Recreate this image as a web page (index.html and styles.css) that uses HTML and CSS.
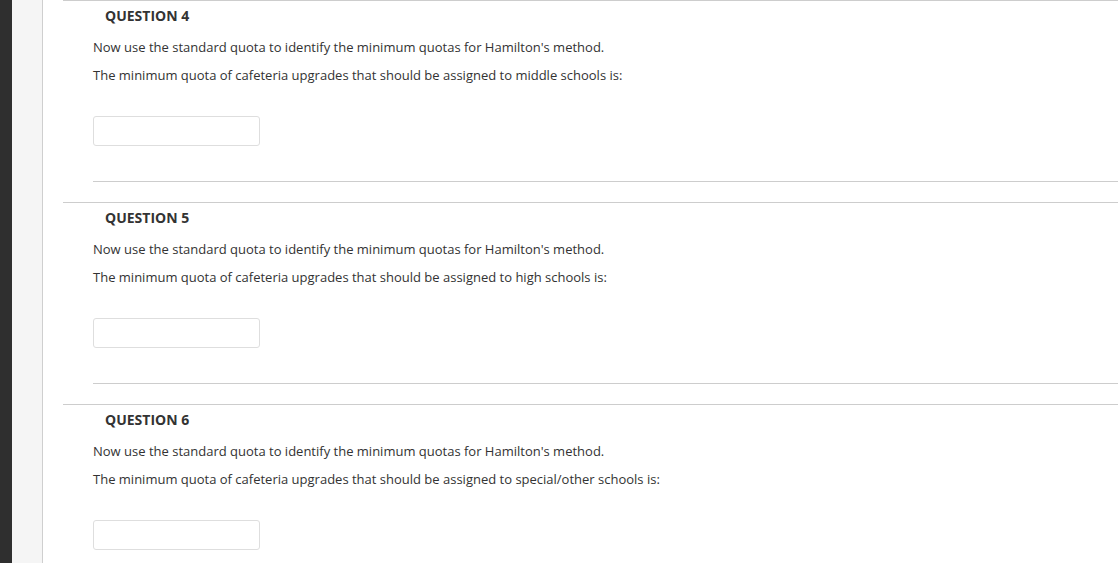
FILE: index.html
```html
<!DOCTYPE html>
<html>
<head>
<meta charset="utf-8">
<link rel="stylesheet" href="styles.css">
</head>
<body>
<div class="page">
  <div class="rail"></div>
  <div class="side"></div>
  <main class="main">
    <section class="question">
      <h3 class="q-title">QUESTION 4</h3>
      <div class="q-body">
        <p class="q-text">Now use the standard quota to identify the minimum quotas for Hamilton's method.</p>
        <p class="q-text">The minimum quota of cafeteria upgrades that should be assigned to middle schools is:</p>
        <input class="q-input" type="text">
        <hr class="q-divider">
      </div>
    </section>
    <section class="question">
      <h3 class="q-title">QUESTION 5</h3>
      <div class="q-body">
        <p class="q-text">Now use the standard quota to identify the minimum quotas for Hamilton's method.</p>
        <p class="q-text">The minimum quota of cafeteria upgrades that should be assigned to high schools is:</p>
        <input class="q-input" type="text">
        <hr class="q-divider">
      </div>
    </section>
    <section class="question">
      <h3 class="q-title">QUESTION 6</h3>
      <div class="q-body">
        <p class="q-text">Now use the standard quota to identify the minimum quotas for Hamilton's method.</p>
        <p class="q-text">The minimum quota of cafeteria upgrades that should be assigned to special/other schools is:</p>
        <input class="q-input" type="text">
        <hr class="q-divider">
      </div>
    </section>
  </main>
</div>
</body>
</html>
```
FILE: styles.css
```css
html, body {
  margin: 0;
  padding: 0;
  background: #fff;
  font-family: "Open Sans", "Liberation Sans", sans-serif;
  color: #333;
  overflow: hidden;
}
.page {
  display: flex;
  min-height: 563px;
}
.rail {
  width: 12px;
  flex: none;
  background: #2f2f2f;
}
.side {
  width: 30px;
  flex: none;
  background: #f5f5f5;
  border-right: 1px solid #cfcfcf;
}
.main {
  flex: 1;
  padding-left: 20px;
}
.question {
  border-top: 1px solid #cdcdcd;
  height: 201px;
}
.q-title {
  margin: 6px 0 0 42px;
  font-size: 14px;
  font-weight: 700;
  line-height: 18px;
  color: #333;
}
.q-body {
  padding-left: 30px;
  padding-top: 13px;
}
.q-text {
  margin: 0 0 10px;
  font-size: 13px;
  line-height: 18px;
  color: #333;
}
.q-input {
  display: block;
  margin-top: 32px;
  width: 167px;
  height: 30px;
  box-sizing: border-box;
  border: 1px solid #dedede;
  border-radius: 3px;
  background: #fff;
  padding: 0;
}
.q-divider {
  margin: 35px 0 0;
  border: 0;
  border-top: 1px solid #cdcdcd;
  height: 0;
}
```
